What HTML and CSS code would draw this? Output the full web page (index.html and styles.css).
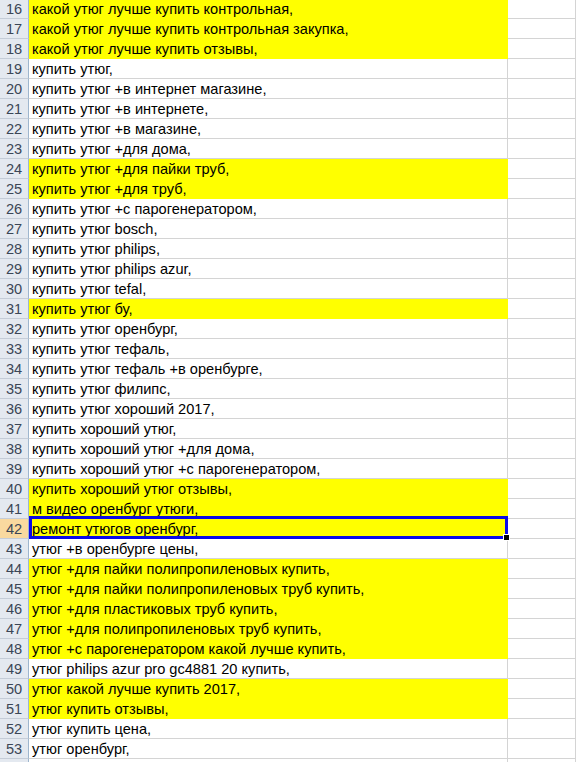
FILE: index.html
```html
<!DOCTYPE html>
<html>
<head>
<meta charset="utf-8">
<link rel="stylesheet" href="styles.css">
</head>
<body>
<div class="sheet">
  <div class="row"><div class="hdr">16</div><div class="a y">какой утюг лучше купить контрольная,</div><div class="b"></div></div>
  <div class="row"><div class="hdr">17</div><div class="a y">какой утюг лучше купить контрольная закупка,</div><div class="b"></div></div>
  <div class="row"><div class="hdr">18</div><div class="a y">какой утюг лучше купить отзывы,</div><div class="b"></div></div>
  <div class="row"><div class="hdr">19</div><div class="a">купить утюг,</div><div class="b"></div></div>
  <div class="row"><div class="hdr">20</div><div class="a">купить утюг +в интернет магазине,</div><div class="b"></div></div>
  <div class="row"><div class="hdr">21</div><div class="a">купить утюг +в интернете,</div><div class="b"></div></div>
  <div class="row"><div class="hdr">22</div><div class="a">купить утюг +в магазине,</div><div class="b"></div></div>
  <div class="row"><div class="hdr">23</div><div class="a">купить утюг +для дома,</div><div class="b"></div></div>
  <div class="row"><div class="hdr">24</div><div class="a y">купить утюг +для пайки труб,</div><div class="b"></div></div>
  <div class="row"><div class="hdr">25</div><div class="a y">купить утюг +для труб,</div><div class="b"></div></div>
  <div class="row"><div class="hdr">26</div><div class="a">купить утюг +с парогенератором,</div><div class="b"></div></div>
  <div class="row"><div class="hdr">27</div><div class="a">купить утюг bosch,</div><div class="b"></div></div>
  <div class="row"><div class="hdr">28</div><div class="a">купить утюг philips,</div><div class="b"></div></div>
  <div class="row"><div class="hdr">29</div><div class="a">купить утюг philips azur,</div><div class="b"></div></div>
  <div class="row"><div class="hdr">30</div><div class="a">купить утюг tefal,</div><div class="b"></div></div>
  <div class="row"><div class="hdr">31</div><div class="a y">купить утюг бу,</div><div class="b"></div></div>
  <div class="row"><div class="hdr">32</div><div class="a">купить утюг оренбург,</div><div class="b"></div></div>
  <div class="row"><div class="hdr">33</div><div class="a">купить утюг тефаль,</div><div class="b"></div></div>
  <div class="row"><div class="hdr">34</div><div class="a">купить утюг тефаль +в оренбурге,</div><div class="b"></div></div>
  <div class="row"><div class="hdr">35</div><div class="a">купить утюг филипс,</div><div class="b"></div></div>
  <div class="row"><div class="hdr">36</div><div class="a">купить утюг хороший 2017,</div><div class="b"></div></div>
  <div class="row"><div class="hdr">37</div><div class="a">купить хороший утюг,</div><div class="b"></div></div>
  <div class="row"><div class="hdr">38</div><div class="a">купить хороший утюг +для дома,</div><div class="b"></div></div>
  <div class="row"><div class="hdr">39</div><div class="a">купить хороший утюг +с парогенератором,</div><div class="b"></div></div>
  <div class="row"><div class="hdr">40</div><div class="a y">купить хороший утюг отзывы,</div><div class="b"></div></div>
  <div class="row"><div class="hdr">41</div><div class="a y">м видео оренбург утюги,</div><div class="b"></div></div>
  <div class="row"><div class="hdr sel">42</div><div class="a y active">ремонт утюгов оренбург,<span class="handle"></span></div><div class="b"></div></div>
  <div class="row"><div class="hdr">43</div><div class="a">утюг +в оренбурге цены,</div><div class="b"></div></div>
  <div class="row"><div class="hdr">44</div><div class="a y">утюг +для пайки полипропиленовых купить,</div><div class="b"></div></div>
  <div class="row"><div class="hdr">45</div><div class="a y">утюг +для пайки полипропиленовых труб купить,</div><div class="b"></div></div>
  <div class="row"><div class="hdr">46</div><div class="a y">утюг +для пластиковых труб купить,</div><div class="b"></div></div>
  <div class="row"><div class="hdr">47</div><div class="a y">утюг +для полипропиленовых труб купить,</div><div class="b"></div></div>
  <div class="row"><div class="hdr">48</div><div class="a y">утюг +с парогенератором какой лучше купить,</div><div class="b"></div></div>
  <div class="row"><div class="hdr">49</div><div class="a">утюг philips azur pro gc4881 20 купить,</div><div class="b"></div></div>
  <div class="row"><div class="hdr">50</div><div class="a y">утюг какой лучше купить 2017,</div><div class="b"></div></div>
  <div class="row"><div class="hdr">51</div><div class="a y">утюг купить отзывы,</div><div class="b"></div></div>
  <div class="row"><div class="hdr">52</div><div class="a">утюг купить цена,</div><div class="b"></div></div>
  <div class="row"><div class="hdr">53</div><div class="a">утюг оренбург,</div><div class="b"></div></div>
  <div class="row"><div class="hdr"></div><div class="a"></div><div class="b"></div></div>
</div>
</body>
</html>
```

FILE: styles.css
```css
html, body {
  margin: 0;
  padding: 0;
  background: #ffffff;
  overflow: hidden;
}
.sheet {
  margin-top: -1px;
  display: flex;
  flex-direction: column;
  width: 600px;
  font-family: "Liberation Sans", Arial, sans-serif;
  font-size: 14.6px;
  color: #000;
}
.row {
  display: flex;
  height: 20px;
}
.hdr {
  width: 28px;
  height: 19px;
  flex: none;
  background: #e4e9f0;
  border-right: 1px solid #9eb6ce;
  border-bottom: 1px solid #c5cdd8;
  color: #3b4656;
  text-align: center;
  line-height: 20px;
}
.hdr.sel {
  background: #f9d99f;
}
.a {
  position: relative;
  width: 475px;
  height: 19px;
  flex: none;
  padding-left: 3px;
  border-right: 1px solid #d4d4d4;
  border-bottom: 1px solid #d4d4d4;
  line-height: 20px;
  white-space: nowrap;
}
.a.y {
  background: #ffff00;
  border-right-color: #ffff00;
  border-bottom-color: #ffff00;
}
.b {
  width: 67px;
  height: 19px;
  flex: none;
  border-right: 1px solid #d4d4d4;
  border-bottom: 1px solid #d4d4d4;
}
.active::after {
  content: "";
  position: absolute;
  left: 0;
  top: -3px;
  width: 473px;
  height: 17px;
  border: 3px solid #0a0ae6;
}
.handle {
  position: absolute;
  right: -3px;
  bottom: -3px;
  width: 5px;
  height: 5px;
  background: #000;
  border: 1px solid #fff;
  z-index: 2;
}
```
